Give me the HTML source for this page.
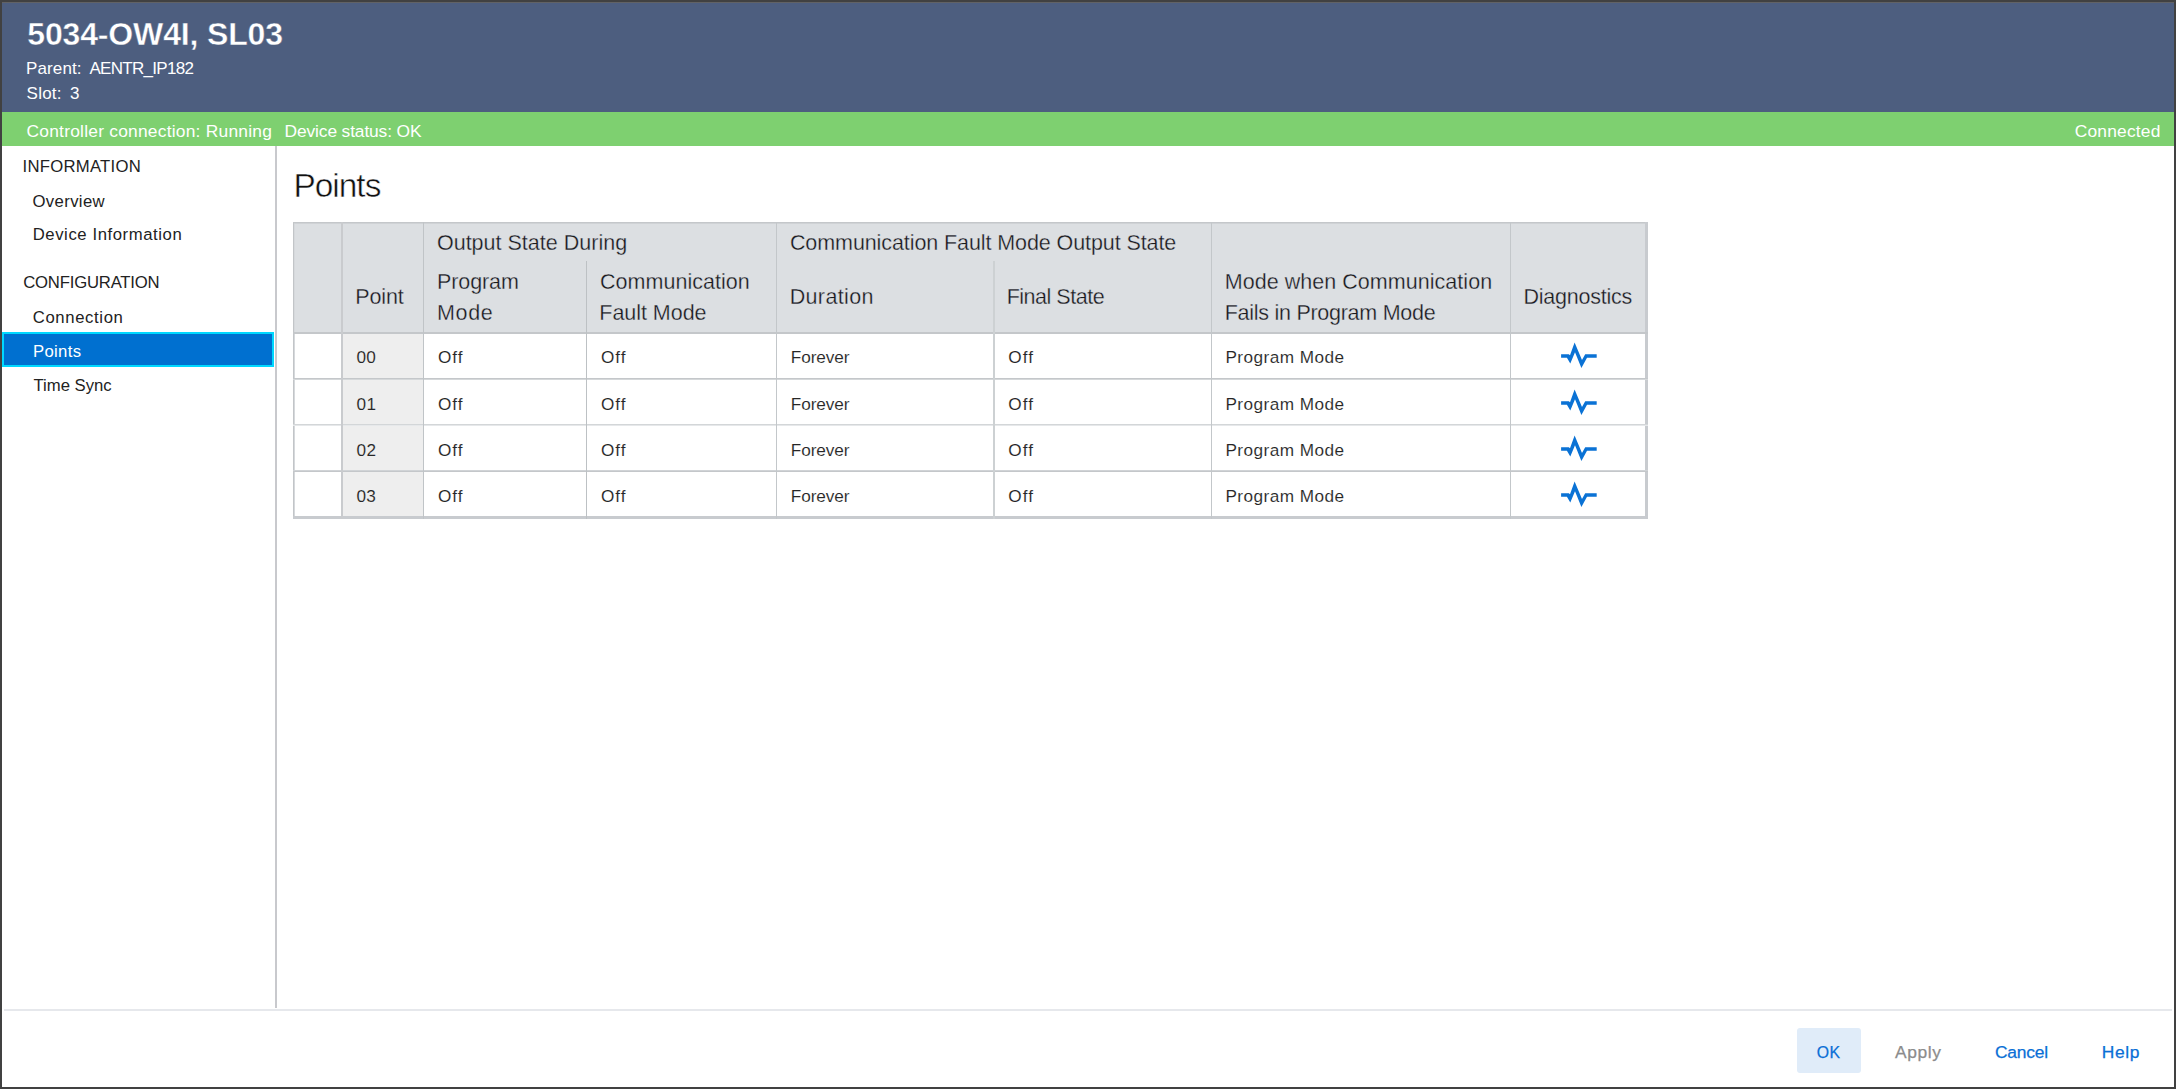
<!DOCTYPE html>
<html><head><meta charset="utf-8">
<style>
html,body{margin:0;padding:0;}
body{width:2176px;height:1089px;position:relative;overflow:hidden;background:#414141;font-family:"Liberation Sans",sans-serif;}
.a{position:absolute;}
.t{position:absolute;white-space:pre;line-height:1;}
</style></head><body>
<div class="a" style="left:2px;top:2px;width:2172px;height:1085px;background:#ffffff;"></div>
<div class="a" style="left:2px;top:2px;width:2172px;height:110px;background:#4d5e7f;"></div>
<div class="a" style="left:2px;top:112px;width:2172px;height:34px;background:#7ed070;"></div>
<div class="a" style="left:2px;top:2px;width:2172px;height:1px;background:#616265;"></div>
<div class="a" style="left:275px;top:146px;width:2px;height:862px;background:#c8c9cd;"></div>
<div class="a" style="left:2px;top:332px;width:268px;height:31px;background:#0070d0;border:2px solid #00d8ff;"></div>
<div class="a" style="left:293px;top:222px;width:1355px;height:110px;background:#dcdfe2;"></div>
<div class="a" style="left:341px;top:332px;width:82px;height:187px;background:#eeeeee;"></div>
<div class="a" style="left:293px;top:222px;width:1px;height:297px;background:#c2c5c8;"></div>
<div class="a" style="left:294px;top:222px;width:1px;height:297px;background:#d6d9dc;"></div>
<div class="a" style="left:293px;top:222px;width:1355px;height:1px;background:#c4c7ca;"></div>
<div class="a" style="left:294px;top:223px;width:1354px;height:1px;background:#cfd2d5;"></div>
<div class="a" style="left:1645px;top:222px;width:3px;height:297px;background:#c8cbcf;"></div>
<div class="a" style="left:293px;top:516px;width:1355px;height:3px;background:#c8cbcf;"></div>
<div class="a" style="left:293px;top:332px;width:1355px;height:2px;background:#c4c7ca;"></div>
<div class="a" style="left:293px;top:378px;width:1355px;height:1px;background:#c4c7ca;"></div>
<div class="a" style="left:293px;top:379px;width:1355px;height:1px;background:#d5d8da;"></div>
<div class="a" style="left:293px;top:424px;width:1355px;height:1px;background:#d3d6d8;"></div>
<div class="a" style="left:293px;top:425px;width:1355px;height:1px;background:#e6e8ea;"></div>
<div class="a" style="left:293px;top:470px;width:1355px;height:1px;background:#d0d3d6;"></div>
<div class="a" style="left:293px;top:471px;width:1355px;height:1px;background:#c4c7ca;"></div>
<div class="a" style="left:341px;top:222px;width:2px;height:297px;background:#c9cbce;"></div>
<div class="a" style="left:423px;top:222px;width:1px;height:297px;background:#c0c4c7;"></div>
<div class="a" style="left:586px;top:261px;width:1px;height:258px;background:#bdc1c4;"></div>
<div class="a" style="left:776px;top:222px;width:1px;height:297px;background:#c3c7ca;"></div>
<div class="a" style="left:993px;top:261px;width:2px;height:258px;background:#cdd1d3;"></div>
<div class="a" style="left:1211px;top:222px;width:1px;height:297px;background:#c3c7ca;"></div>
<div class="a" style="left:1510px;top:222px;width:1px;height:297px;background:#c3c7ca;"></div>
<svg class="a" style="left:1556px;top:336px" width="46" height="180"><polygon points="5.10,18.20 12.80,18.20 14.00,19.30 18.60,6.40 26.00,23.90 29.20,18.20 40.70,18.20 40.70,21.70 31.00,21.70 25.40,32.00 19.00,16.20 14.30,27.60 10.90,21.70 5.10,21.70" fill="#0a72d5"/></svg>
<svg class="a" style="left:1556px;top:336px" width="46" height="180"><polygon points="5.10,65.20 12.80,65.20 14.00,66.30 18.60,53.40 26.00,70.90 29.20,65.20 40.70,65.20 40.70,68.70 31.00,68.70 25.40,79.00 19.00,63.20 14.30,74.60 10.90,68.70 5.10,68.70" fill="#0a72d5"/></svg>
<svg class="a" style="left:1556px;top:336px" width="46" height="180"><polygon points="5.10,111.20 12.80,111.20 14.00,112.30 18.60,99.40 26.00,116.90 29.20,111.20 40.70,111.20 40.70,114.70 31.00,114.70 25.40,125.00 19.00,109.20 14.30,120.60 10.90,114.70 5.10,114.70" fill="#0a72d5"/></svg>
<svg class="a" style="left:1556px;top:336px" width="46" height="180"><polygon points="5.10,157.20 12.80,157.20 14.00,158.30 18.60,145.40 26.00,162.90 29.20,157.20 40.70,157.20 40.70,160.70 31.00,160.70 25.40,171.00 19.00,155.20 14.30,166.60 10.90,160.70 5.10,160.70" fill="#0a72d5"/></svg>
<div class="a" style="left:4px;top:1009px;width:2168px;height:2px;background:#e6e8ec;"></div>
<div class="a" style="left:1797px;top:1028px;width:64px;height:45px;background:#e0ecf9;border-radius:3px;"></div>
<div class="t" style="left:27.30px;top:18px;font-size:32px;color:#ffffff;font-weight:bold;letter-spacing:-0.157px;-webkit-text-stroke:0.4px #4d5e7f;">5034-OW4I, SL03</div>
<div class="t" style="left:26.00px;top:60px;font-size:17px;color:#ffffff;letter-spacing:0.119px;">Parent:</div>
<div class="t" style="left:89.50px;top:60px;font-size:17px;color:#ffffff;letter-spacing:-0.714px;">AENTR_IP182</div>
<div class="t" style="left:26.60px;top:85px;font-size:17px;color:#ffffff;letter-spacing:0.227px;">Slot:</div>
<div class="t" style="left:69.90px;top:85px;font-size:17px;color:#ffffff;">3</div>
<div class="t" style="left:26.50px;top:123px;font-size:17.4px;color:#ffffff;letter-spacing:0.226px;">Controller connection: Running</div>
<div class="t" style="left:284.60px;top:123px;font-size:17.4px;color:#ffffff;letter-spacing:-0.140px;">Device status: OK</div>
<div class="t" style="left:2074.70px;top:123px;font-size:17.4px;color:#ffffff;letter-spacing:0.189px;">Connected</div>
<div class="t" style="left:22.50px;top:159px;font-size:16.7px;color:#222222;letter-spacing:0.271px;">INFORMATION</div>
<div class="t" style="left:32.50px;top:194px;font-size:16.7px;color:#222222;letter-spacing:0.366px;">Overview</div>
<div class="t" style="left:32.70px;top:227px;font-size:16.7px;color:#222222;letter-spacing:0.586px;">Device Information</div>
<div class="t" style="left:23.20px;top:275px;font-size:16.7px;color:#222222;letter-spacing:-0.191px;">CONFIGURATION</div>
<div class="t" style="left:32.80px;top:310px;font-size:16.7px;color:#222222;letter-spacing:0.622px;">Connection</div>
<div class="t" style="left:32.90px;top:344px;font-size:16.7px;color:#ffffff;letter-spacing:0.367px;">Points</div>
<div class="t" style="left:33.50px;top:378px;font-size:16.7px;color:#222222;">Time Sync</div>
<div class="t" style="left:293.44px;top:169px;font-size:33.4px;color:#111111;letter-spacing:-0.975px;-webkit-text-stroke:0.5px #fff;">Points</div>
<div class="t" style="left:436.95px;top:233px;font-size:21.5px;color:#1a1a1a;letter-spacing:0.007px;-webkit-text-stroke:0.3px #dcdfe2;">Output State During</div>
<div class="t" style="left:789.95px;top:233px;font-size:21.5px;color:#1a1a1a;letter-spacing:-0.090px;-webkit-text-stroke:0.3px #dcdfe2;">Communication Fault Mode Output State</div>
<div class="t" style="left:355.25px;top:287px;font-size:21.5px;color:#1a1a1a;letter-spacing:-0.108px;-webkit-text-stroke:0.3px #dcdfe2;">Point</div>
<div class="t" style="left:436.95px;top:272px;font-size:21.5px;color:#1a1a1a;letter-spacing:-0.089px;-webkit-text-stroke:0.3px #dcdfe2;">Program</div>
<div class="t" style="left:436.95px;top:303px;font-size:21.5px;color:#1a1a1a;letter-spacing:0.692px;-webkit-text-stroke:0.3px #dcdfe2;">Mode</div>
<div class="t" style="left:600.05px;top:272px;font-size:21.5px;color:#1a1a1a;letter-spacing:0.024px;-webkit-text-stroke:0.3px #dcdfe2;">Communication</div>
<div class="t" style="left:599.35px;top:303px;font-size:21.5px;color:#1a1a1a;letter-spacing:-0.044px;-webkit-text-stroke:0.3px #dcdfe2;">Fault Mode</div>
<div class="t" style="left:789.65px;top:287px;font-size:21.5px;color:#1a1a1a;letter-spacing:0.370px;-webkit-text-stroke:0.3px #dcdfe2;">Duration</div>
<div class="t" style="left:1006.65px;top:287px;font-size:21.5px;color:#1a1a1a;letter-spacing:-0.482px;-webkit-text-stroke:0.3px #dcdfe2;">Final State</div>
<div class="t" style="left:1224.75px;top:272px;font-size:21.5px;color:#1a1a1a;letter-spacing:0.039px;-webkit-text-stroke:0.3px #dcdfe2;">Mode when Communication</div>
<div class="t" style="left:1224.75px;top:303px;font-size:21.5px;color:#1a1a1a;letter-spacing:-0.271px;-webkit-text-stroke:0.3px #dcdfe2;">Fails in Program Mode</div>
<div class="t" style="left:1523.55px;top:287px;font-size:21.5px;color:#1a1a1a;letter-spacing:-0.238px;-webkit-text-stroke:0.3px #dcdfe2;">Diagnostics</div>
<div class="t" style="left:356.45px;top:349px;font-size:17.2px;color:#262626;letter-spacing:0.334px;-webkit-text-stroke:0.1px #eee;">00</div>
<div class="t" style="left:437.95px;top:349px;font-size:17.2px;color:#262626;letter-spacing:1.027px;-webkit-text-stroke:0.1px #fff;">Off</div>
<div class="t" style="left:600.95px;top:349px;font-size:17.2px;color:#262626;letter-spacing:1.027px;-webkit-text-stroke:0.1px #fff;">Off</div>
<div class="t" style="left:790.75px;top:349px;font-size:17.2px;color:#262626;letter-spacing:-0.089px;-webkit-text-stroke:0.1px #fff;">Forever</div>
<div class="t" style="left:1008.35px;top:349px;font-size:17.2px;color:#262626;letter-spacing:1.027px;-webkit-text-stroke:0.1px #fff;">Off</div>
<div class="t" style="left:1225.45px;top:349px;font-size:17.2px;color:#262626;letter-spacing:0.455px;-webkit-text-stroke:0.1px #fff;">Program Mode</div>
<div class="t" style="left:356.45px;top:396px;font-size:17.2px;color:#262626;letter-spacing:0.434px;-webkit-text-stroke:0.1px #eee;">01</div>
<div class="t" style="left:437.95px;top:396px;font-size:17.2px;color:#262626;letter-spacing:1.027px;-webkit-text-stroke:0.1px #fff;">Off</div>
<div class="t" style="left:600.95px;top:396px;font-size:17.2px;color:#262626;letter-spacing:1.027px;-webkit-text-stroke:0.1px #fff;">Off</div>
<div class="t" style="left:790.75px;top:396px;font-size:17.2px;color:#262626;letter-spacing:-0.089px;-webkit-text-stroke:0.1px #fff;">Forever</div>
<div class="t" style="left:1008.35px;top:396px;font-size:17.2px;color:#262626;letter-spacing:1.027px;-webkit-text-stroke:0.1px #fff;">Off</div>
<div class="t" style="left:1225.45px;top:396px;font-size:17.2px;color:#262626;letter-spacing:0.455px;-webkit-text-stroke:0.1px #fff;">Program Mode</div>
<div class="t" style="left:356.45px;top:442px;font-size:17.2px;color:#262626;letter-spacing:0.434px;-webkit-text-stroke:0.1px #eee;">02</div>
<div class="t" style="left:437.95px;top:442px;font-size:17.2px;color:#262626;letter-spacing:1.027px;-webkit-text-stroke:0.1px #fff;">Off</div>
<div class="t" style="left:600.95px;top:442px;font-size:17.2px;color:#262626;letter-spacing:1.027px;-webkit-text-stroke:0.1px #fff;">Off</div>
<div class="t" style="left:790.75px;top:442px;font-size:17.2px;color:#262626;letter-spacing:-0.089px;-webkit-text-stroke:0.1px #fff;">Forever</div>
<div class="t" style="left:1008.35px;top:442px;font-size:17.2px;color:#262626;letter-spacing:1.027px;-webkit-text-stroke:0.1px #fff;">Off</div>
<div class="t" style="left:1225.45px;top:442px;font-size:17.2px;color:#262626;letter-spacing:0.455px;-webkit-text-stroke:0.1px #fff;">Program Mode</div>
<div class="t" style="left:356.45px;top:488px;font-size:17.2px;color:#262626;letter-spacing:0.334px;-webkit-text-stroke:0.1px #eee;">03</div>
<div class="t" style="left:437.95px;top:488px;font-size:17.2px;color:#262626;letter-spacing:1.027px;-webkit-text-stroke:0.1px #fff;">Off</div>
<div class="t" style="left:600.95px;top:488px;font-size:17.2px;color:#262626;letter-spacing:1.027px;-webkit-text-stroke:0.1px #fff;">Off</div>
<div class="t" style="left:790.75px;top:488px;font-size:17.2px;color:#262626;letter-spacing:-0.089px;-webkit-text-stroke:0.1px #fff;">Forever</div>
<div class="t" style="left:1008.35px;top:488px;font-size:17.2px;color:#262626;letter-spacing:1.027px;-webkit-text-stroke:0.1px #fff;">Off</div>
<div class="t" style="left:1225.45px;top:488px;font-size:17.2px;color:#262626;letter-spacing:0.455px;-webkit-text-stroke:0.1px #fff;">Program Mode</div>
<div class="t" style="left:1816.72px;top:1045px;font-size:15.8px;color:#0a6fd6;letter-spacing:0.470px;-webkit-text-stroke:0.25px currentColor;">OK</div>
<div class="t" style="left:1895.12px;top:1044px;font-size:17.4px;color:#8c8c8c;letter-spacing:0.559px;-webkit-text-stroke:0.25px currentColor;">Apply</div>
<div class="t" style="left:1994.92px;top:1044px;font-size:17.4px;color:#0a6fd6;letter-spacing:-0.187px;-webkit-text-stroke:0.25px currentColor;">Cancel</div>
<div class="t" style="left:2101.72px;top:1044px;font-size:17.4px;color:#0a6fd6;letter-spacing:0.651px;-webkit-text-stroke:0.25px currentColor;">Help</div>
</body></html>
